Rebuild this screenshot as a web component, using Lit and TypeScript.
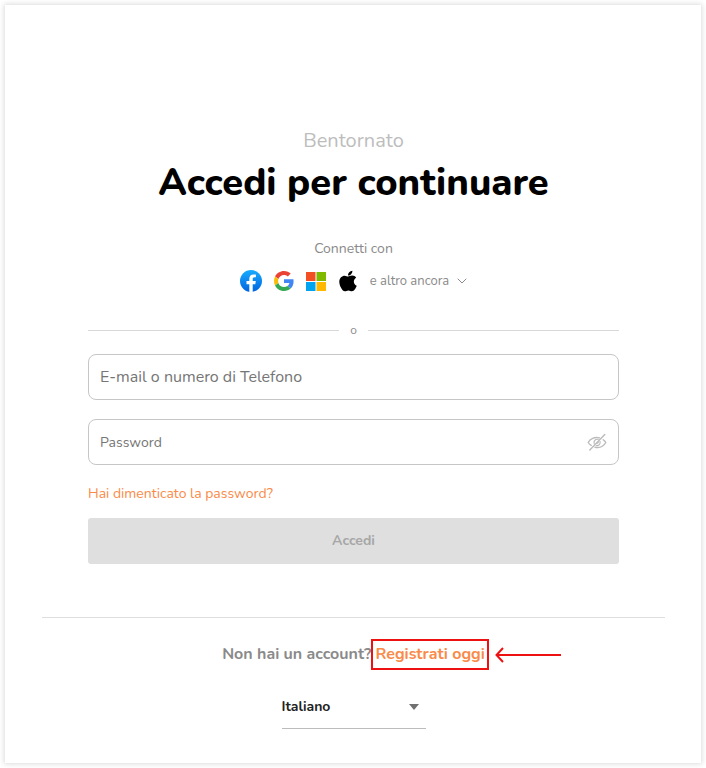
import { LitElement, html, css, svg } from "lit";
import { customElement, state } from "lit/decorators.js";

const facebook = svg`
  <svg viewBox="1 1 22 22" width="22" height="22" aria-hidden="true">
    <defs>
      <linearGradient id="fb" x1="0" y1="0" x2="0" y2="1">
        <stop offset="0" stop-color="#18acfe" />
        <stop offset="1" stop-color="#0163e0" />
      </linearGradient>
    </defs>
    <circle cx="12" cy="12" r="11" fill="url(#fb)" />
    <path fill="#fff" d="M16.3 15.2l.5-3.2h-3.1v-2c0-.9.4-1.7 1.8-1.7h1.4V5.6s-1.3-.2-2.5-.2c-2.5 0-4.1 1.5-4.1 4.3V12H7.5v3.2h2.8v7.7a11.2 11.2 0 0 0 3.4 0v-7.7z" />
  </svg>`;

const google = svg`
  <svg viewBox="0 0 48 48" width="20" height="20" aria-hidden="true">
    <path fill="#ea4335" d="M24 9.500c3.540 0 6.710 1.220 9.210 3.600l6.850-6.850C35.900 2.380 30.470 0 24 0 14.620 0 6.510 5.380 2.560 13.220l7.980 6.190C12.430 13.720 17.740 9.500 24 9.500z" />
    <path fill="#4285f4" d="M46.980 24.550c0-1.570-.15-3.090-.38-4.550H24v9.020h12.940c-.58 2.960-2.260 5.480-4.780 7.180l7.730 6c4.510-4.180 7.090-10.360 7.090-17.650z" />
    <path fill="#fbbc05" d="M10.530 28.590c-.48-1.450-.76-2.990-.76-4.590s.27-3.140.76-4.590l-7.980-6.190C.92 16.460 0 20.120 0 24c0 3.880.92 7.540 2.560 10.780l7.970-6.190z" />
    <path fill="#34a853" d="M24 48c6.480 0 11.930-2.130 15.890-5.810l-7.730-6c-2.150 1.450-4.920 2.300-8.160 2.300-6.260 0-11.570-4.220-13.470-9.910l-7.980 6.190C6.510 42.620 14.620 48 24 48z" />
  </svg>`;

const microsoft = svg`
  <svg viewBox="0 0 20 20" width="20" height="20" aria-hidden="true">
    <path fill="#f25022" d="M0 1h9.500v9H0z" />
    <path fill="#7fba00" d="M10.500 1H20v9h-9.500z" />
    <path fill="#00a4ef" d="M0 11h9.500v9H0z" />
    <path fill="#ffb900" d="M10.500 11H20v9h-9.500z" />
  </svg>`;

const apple = svg`
  <svg viewBox="-24 0 432 512" width="20" height="24" aria-hidden="true">
    <path d="M318.700 268.700c-.2-36.700 16.400-64.400 50-84.800-18.800-26.900-47.200-41.700-84.700-44.600-35.500-2.800-74.300 20.700-88.500 20.700-15 0-49.400-19.700-76.400-19.700C63.300 141.200 4 184.800 4 273.500q0 39.300 14.400 81.200c12.800 36.700 59 126.700 107.200 125.200 25.200-.6 43-17.900 75.800-17.900 31.800 0 48.300 17.900 76.400 17.900 48.600-.7 90.400-82.500 102.600-119.300-65.200-30.700-61.700-90-61.700-91.900zm-56.600-164.200c27.300-32.400 24.800-61.900 24-72.500-24.100 1.400-52 16.400-67.900 34.900-17.500 19.800-27.800 44.300-25.600 71.900 26.100 2 49.900-11.400 69.500-34.300z" />
  </svg>`;

const chevron = svg`
  <svg viewBox="0 0 10 6" width="10" height="6" fill="none" stroke="currentColor" aria-hidden="true">
    <path d="M1 1l4 4 4-4" stroke-linecap="round" stroke-linejoin="round" />
  </svg>`;

const eyeOff = svg`
  <svg viewBox="0 0 20 18" width="20" height="18" fill="none" stroke="currentColor" stroke-linecap="round" aria-hidden="true">
    <path stroke-width="1.400" d="M12.500 4.900C7.500 3.400 3 6 1.200 9.500c.8 1.300 1.800 2.200 3 2.900M8 14.200C12.700 15.400 16.700 13 18.800 9.500c-.7-1.200-1.600-2.100-2.600-2.800" />
    <path stroke-width="1.200" d="M11.200 6.500A3.100 3.100 0 0 0 7.200 10.500M9.200 12.500A3.100 3.100 0 0 0 13 8.500M9.700 10.200a1.200 1.200 0 0 0 1.500-1.500" />
    <path stroke-width="1.400" d="M2.800 17L17.800 1.500" />
  </svg>`;

const arrow = svg`
  <svg class="arrow" viewBox="0 0 66 16" width="66" height="16" fill="none" stroke="currentColor" stroke-width="2" aria-hidden="true">
    <path d="M66 8H2M8 1L1.500 8 8 15" />
  </svg>`;

@customElement("app-root")
export class AppRoot extends LitElement {
  static styles = css`
    :host {
      display: block;
      box-sizing: border-box;
      min-height: 100vh;
      padding: 5px;
      background: #fff;
      color: #8a8a8a;
      font: 14px/20px Nunito, Lato, "Open Sans", sans-serif;
    }
    *, ::before, ::after { box-sizing: border-box; }
    svg { display: block; flex: none; }
    button, input, select { font: inherit; color: inherit; }
    button { border: 0; padding: 0; background: none; cursor: pointer; }
    a { color: #fa8a48; text-decoration: none; }
    .card {
      padding: 121px 36px 34px 37px;
      background: #fff;
      box-shadow: 0 0 5px 1px #dcdcdc;
    }
    .content {
      padding: 0 46px;
      text-align: center;
    }
    .welcome { margin: 0; font-size: 20px; line-height: 30px; color: #bdbdbd; }
    h1 { margin: 0; font-size: 38px; line-height: 54px; font-weight: 800; color: #000; }
    .connect { margin: 29px 0 0; }
    .social {
      display: flex;
      justify-content: center;
      align-items: center;
      height: 24px;
      margin-top: 10px;
      gap: 12px;
    }
    .more { display: flex; align-items: center; gap: 8px; font-size: 13px; }
    .or {
      display: flex;
      align-items: center;
      gap: 11px;
      margin-top: 27px;
      font-size: 12px;
    }
    .or::before, .or::after { content: ""; flex: 1; height: 1px; background: #d8d8d8; }
    form { margin-top: 14px; text-align: left; }
    .field {
      display: flex;
      align-items: center;
      height: 46px;
      margin-bottom: 19px;
      padding: 0 11px;
      border: 1px solid #c6c6c6;
      border-radius: 8px;
    }
    .field input {
      flex: 1;
      min-width: 0;
      height: 100%;
      padding: 0;
      border: 0;
      outline: 0;
      background: none;
      color: #333;
    }
    .field ::placeholder { color: #757575; opacity: 1; }
    .email { font-size: 16px; }
    .eye { color: #bbb; }
    .submit {
      display: block;
      width: 100%;
      height: 46px;
      margin-top: 14px;
      border-radius: 3px;
      background: #dfdfdf;
      color: #a6a6a6;
      font-weight: 700;
      text-align: center;
    }
    hr { height: 1px; margin: 53px 0 0; border: 0; background: #dedede; }
    .register {
      display: flex;
      justify-content: center;
      margin: 24px 0 0;
      font-size: 16px;
      line-height: 24px;
      font-weight: 700;
    }
    .signup {
      position: relative;
      margin: -1px -2px -2px 2px;
      padding: 1px 2px 2px;
      outline: 2px solid #ee1111;
    }
    .arrow { position: absolute; left: calc(100% + 8px); top: 6px; color: #ee1111; }
    .language {
      display: flex;
      align-items: center;
      width: 144px;
      height: 47px;
      margin: 16px auto 0;
      padding-top: 4px;
      border-bottom: 1px solid #bcbcbc;
      color: #222;
      font-weight: 700;
    }
    .language select {
      flex: 1;
      min-width: 0;
      height: 100%;
      padding: 0;
      border: 0;
      outline: 0;
      appearance: none;
      background: none;
    }
    .language::after {
      content: "";
      margin-right: 7px;
      border: 5px solid transparent;
      border-top: 6px solid #707070;
      border-bottom: 0;
      pointer-events: none;
    }
  `;

  @state() private showPassword = false;

  render() {
    return html`
      <main class="card">
        <section class="content">
          <p class="welcome">Bentornato</p>
          <h1>Accedi per continuare</h1>
          <p class="connect">Connetti con</p>
          <div class="social">
            <button type="button" aria-label="Facebook">${facebook}</button>
            <button type="button" aria-label="Google">${google}</button>
            <button type="button" aria-label="Microsoft">${microsoft}</button>
            <button type="button" aria-label="Apple">${apple}</button>
            <button type="button" class="more">e altro ancora ${chevron}</button>
          </div>
          <div class="or">o</div>
          <form @submit=${(e: Event) => e.preventDefault()}>
            <div class="field email">
              <input type="text" aria-label="E-mail o numero di Telefono" placeholder="E-mail o numero di Telefono" />
            </div>
            <div class="field">
              <input
                type=${this.showPassword ? "text" : "password"}
                aria-label="Password"
                placeholder="Password"
              />
              <button
                type="button"
                class="eye"
                aria-label="Mostra password"
                @click=${() => (this.showPassword = !this.showPassword)}
              >${eyeOff}</button>
            </div>
            <a href="#password">Hai dimenticato la password?</a>
            <button class="submit" disabled>Accedi</button>
          </form>
        </section>
        <hr />
        <p class="register">
          <span>Non hai un account?</span>
          <a class="signup" href="#registrati">Registrati oggi${arrow}</a>
        </p>
        <div class="language">
          <select aria-label="Lingua">
            <option>Italiano</option>
            <option>English</option>
          </select>
        </div>
      </main>
    `;
  }
}
